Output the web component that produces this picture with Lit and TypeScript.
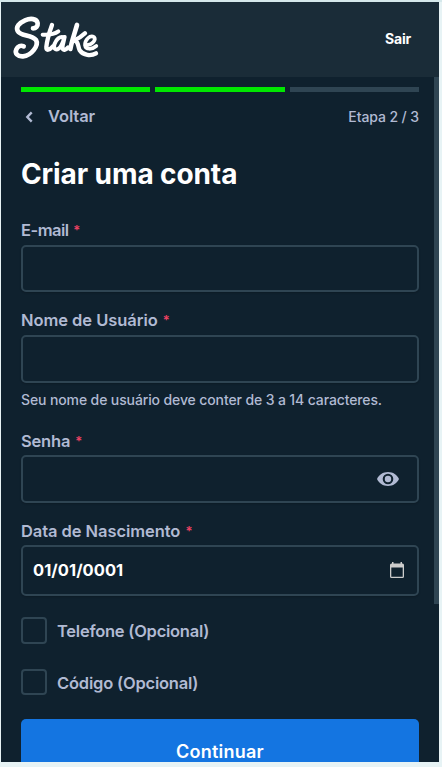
import { LitElement, html, css } from "lit";
import { customElement, property } from "lit/decorators.js";

const logo = html`<svg class="logo" width="100" height="60" viewBox="0 0 300 180" fill="none" stroke="#fff" stroke-linecap="round" stroke-linejoin="round">
  <path stroke-width="14" d="M84 61C93 61 99 54 98 46C96 31 76 30 60 37C42 45 32 57 38 69C46 85 80 80 93 96C102 112 80 143 54 145C37 146 29 136 34 124C38 114 48 111 56 115"/>
  <path stroke-width="13" d="M141 51C134 70 126 98 124 117C123 129 133 127 143 116"/>
  <path stroke-width="12" d="M113 80C128 81 149 78 160 70"/>
  <path stroke-width="12" d="M177 88C164 83 154 95 149 107C144 121 151 129 162 121C170 115 175 99 179 87C176 103 171 115 173 122C175 129 183 125 189 118"/>
  <path stroke-width="14" d="M216 51C209 76 200 100 196 123"/>
  <path stroke-width="13" d="M240 76C229 87 216 94 205 98C222 98 218 116 224 127C235 143 258 145 273 136"/>
  <path stroke-width="11" d="M246 111C263 110 274 95 267 87C255 80 239 96 240 112C242 126 261 125 274 114"/>
</svg>`;

@customElement("form-field")
class FormField extends LitElement {
  @property() label = "";
  static styles = css`
    :host { display: block; }
    .label { height: 25px; line-height: var(--line, 20px); box-sizing: border-box; color: #b1bad3; font-weight: 600; font-size: 16.5px; white-space: nowrap; letter-spacing: var(--track, 0); }
    .star { color: #ed4163; font-size: 13px; font-weight: 600; margin-left: 1px; letter-spacing: 0; line-height: 1; position: relative; top: -1px; }
    .box { box-sizing: border-box; height: var(--box, 48px); border: 2px solid #2f4553; border-radius: 5px; display: flex; align-items: center; justify-content: space-between; padding: 0 var(--end, 18px) 0 10px; box-shadow: 0 1px 2px #0003; }
  `;
  render() {
    return html`<div class="label">${this.label} <span class="star">*</span></div>
      <div class="box"><slot></slot></div>`;
  }
}

@customElement("app-root")
class AppRoot extends LitElement {
  static styles = css`
    :host { display: block; width: 442px; height: 767px; box-sizing: border-box; padding: 2px 3px 5px 1px; background: #e7f3f5; background-image: linear-gradient(#d5e8eb 2px, transparent 2px); font-family: Inter, sans-serif; overflow: hidden; }
    .panel { height: 760px; background: #0f212e; overflow: hidden; position: relative; color: #b1bad3; white-space: nowrap; }
    header { height: 75px; box-sizing: border-box; background: #1a2c38; display: flex; justify-content: space-between; align-items: flex-start; padding: 6px 28px 0 4px; }
    .exit { color: #fff; font-weight: 700; font-size: 14px; line-height: 20px; margin-top: 21px; letter-spacing: -0.2px; }
    .scroll { position: absolute; right: 0; top: 75px; width: 5px; height: 527px; background: #2f4553; }
    main { padding: 10px 20px 0; }
    .steps { display: grid; grid-template-columns: 129px 130px 129px; gap: 5px; height: 5px; }
    .step { background: #2f4553; }
    .done { background: #00e701; }
    .nav { display: flex; align-items: center; height: 20px; margin-top: 15px; }
    .chev { margin-left: 3px; }
    .back { margin-left: 12px; font-size: 16.5px; line-height: 20px; margin-top: -2px; font-weight: 600; letter-spacing: -0.1px; }
    .count { margin-left: auto; font-size: 14px; line-height: 20px; margin-top: -1px; font-weight: 500; letter-spacing: -0.1px; }
    h1 { margin: 29px 0 0; height: 36px; line-height: 36px; font-size: 28px; font-weight: 700; color: #fff; letter-spacing: -0.1px; }
    .email { margin-top: 28px; --box: 47px; --track: -0.5px; }
    .user { margin-top: 18px; --track: -0.05px; }
    .hint { height: 20px; line-height: 20px; margin-top: 7px; font-size: 14px; font-weight: 500; letter-spacing: -0.12px; }
    .pass { margin-top: 20px; --track: -0.2px; --end: 18px; --line: 22px; }
    .birth { margin-top: 17px; --box: 51px; --track: -0.07px; --end: 12px; --line: 22px; }
    .icon { margin-left: auto; display: block; }
    .date { color: #fff; font-weight: 700; font-size: 16.5px; line-height: 20px; margin-top: -1px; letter-spacing: 0.05px; }
    .opt { display: flex; align-items: center; height: 27px; line-height: 20px; font-weight: 600; font-size: 16.5px; letter-spacing: -0.25px; }
    .phone { margin-top: 21px; }
    .code { margin-top: 25px; height: 26px; line-height: 22px; letter-spacing: -0.2px; }
    .code span + span { margin-top: 2px; }
    .check { box-sizing: border-box; width: 26px; height: 27px; border: 2px solid #2f4553; border-radius: 4px; margin-right: 10px; }
    .code .check { height: 26px; }
    .go { margin-top: 24px; height: 64px; line-height: 65px; border-radius: 5px; background: #1475e1; color: #fff; text-align: center; font-weight: 600; font-size: 18px; letter-spacing: 0.25px; }
  `;
  render() {
    return html`<div class="panel">
      <header>${logo}<span class="exit">Sair</span></header>
      <main>
        <div class="steps">${[true, true, false].map((d) => html`<span class=${d ? "step done" : "step"}></span>`)}</div>
        <div class="nav">
          <svg class="chev" width="12" height="12" viewBox="0 0 12 12"><path d="M7.700 1.400L3.300 6L7.700 10.600" fill="none" stroke="#b1bad3" stroke-width="2.400"/></svg>
          <span class="back">Voltar</span><span class="count">Etapa 2 / 3</span>
        </div>
        <h1>Criar uma conta</h1>
        <form-field class="email" label="E-mail"></form-field>
        <form-field class="user" label="Nome de Usuário"></form-field>
        <div class="hint">Seu nome de usuário deve conter de 3 a 14 caracteres.</div>
        <form-field class="pass" label="Senha">
          <svg class="icon" width="22" height="14" viewBox="0 0 22 14"><path fill="#b1bad3" fill-rule="evenodd" d="M11 0C6 0 1.800 2.800 0 7C1.800 11.200 6 14 11 14S20.200 11.200 22 7C20.200 2.800 16 0 11 0ZM11 1.700A5.300 5.300 0 1 1 11 12.300A5.300 5.300 0 1 1 11 1.700ZM11 3.800A3.200 3.200 0 1 0 11 10.200A3.200 3.200 0 1 0 11 3.800Z"/></svg>
        </form-field>
        <form-field class="birth" label="Data de Nascimento">
          <span class="date">01/01/0001</span>
          <svg class="icon" width="16" height="17" viewBox="0 0 16 17"><path fill="#ccc" fill-rule="evenodd" d="M3 0H4.500V1.500H11.500V0H13V1.500H13.500Q15 1.500 15 3V14.500Q15 16 13.500 16H2.500Q1 16 1 14.500V3Q1 1.500 2.500 1.500H3ZM2.300 5.500V14.700H13.700V5.500Z"/></svg>
        </form-field>
        <div class="opt phone"><span class="check"></span><span>Telefone (Opcional)</span></div>
        <div class="opt code"><span class="check"></span><span>Código (Opcional)</span></div>
        <div class="go">Continuar</div>
      </main>
      <div class="scroll"></div>
    </div>`;
  }
}
